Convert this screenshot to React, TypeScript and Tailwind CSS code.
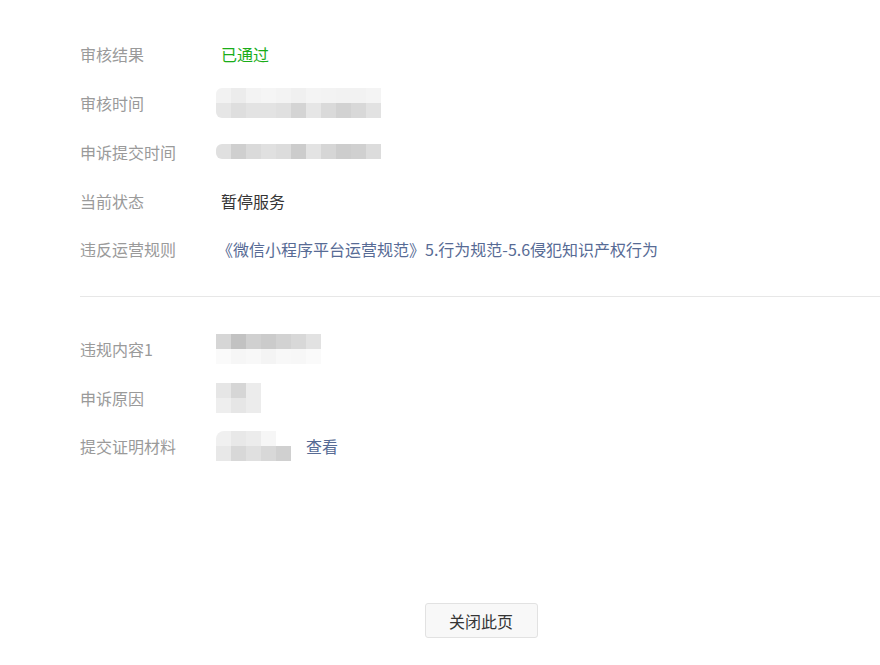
import React from "react";

const font = { fontFamily: '"Noto Sans CJK SC", "Noto Sans", sans-serif' };

// pixelated placeholder made of 15px tiles
const Mosaic = ({ rows, className = "" }: { rows: string[][]; className?: string }) => (
  <div className={`flex flex-col blur-[0.6px] -ml-[5px] ${className}`}>
    {rows.map((r, i) => (
      <div key={i} className="flex">
        {r.map((c, j) => (
          <div key={j} className="w-[15px] h-[15px]" style={{ background: c }} />
        ))}
      </div>
    ))}
  </div>
);

const Row = ({ label, h, children }: { label: string; h: string; children: React.ReactNode }) => (
  <div className={`flex items-center ${h}`}>
    <div className="w-[141px] shrink-0 text-[#9a9a9a]">{label}</div>
    <div className="flex items-center">{children}</div>
  </div>
);

export default function App() {
  const a = "h-[48.75px]";
  const b = "h-[48.5px]";
  return (
    <div className="bg-white min-h-screen w-[880px] h-[665px] text-[16px] flex flex-col" style={font}>
      <div className="pl-[80px] pt-[30px]">
        <Row h={a} label="审核结果">
          <span className="text-[#1aad19]">已通过</span>
        </Row>
        <Row h={a} label="审核时间">
          <Mosaic
            className="rounded-l-[6px] overflow-hidden"
            rows={[
              ["#f2f2f2", "#ececec", "#f3f3f3", "#f5f5f5", "#f3f3f3", "#f0f0f0", "#f4f4f4", "#f3f3f3", "#f2f2f2", "#f2f2f2", "#f4f4f4"],
              ["#e6e6e6", "#dedede", "#e3e3e3", "#e3e3e3", "#e0e0e0", "#d4d4d4", "#e6e6e6", "#dadada", "#d2d2d2", "#d8d8d8", "#e2e2e2"],
            ]}
          />
        </Row>
        <Row h={a} label="申诉提交时间">
          <Mosaic
            className="rounded-l-[6px] overflow-hidden"
            rows={[["#e0e0e0", "#cfcfcf", "#dadada", "#e0e0e0", "#dcdcdc", "#cccccc", "#e3e3e3", "#d6d6d6", "#cdcdcd", "#d0d0d0", "#dcdcdc"]]}
          />
        </Row>
        <Row h={a} label="当前状态">
          <span className="text-[#353535]">暂停服务</span>
        </Row>
        <Row h={a} label="违反运营规则">
          <span className="text-[#576b95] -ml-[4px]">《微信小程序平台运营规范》5.行为规范-5.6侵犯知识产权行为</span>
        </Row>
      </div>

      <div className="ml-[80px] mt-[22px] border-t border-[#e7e7e7]" />

      <div className="pl-[80px] pt-[28px]">
        <Row h={b} label="违规内容1">
          <Mosaic
            rows={[
              ["#d6d6d6", "#c2c2c2", "#d0d0d0", "#cbcbcb", "#d2d2d2", "#d8d8d8", "#e2e2e2"],
              ["#fafafa", "#f6f6f6", "#f8f8f8", "#f4f4f4", "#f8f8f8", "#f7f7f7", "#fafafa"],
            ]}
          />
        </Row>
        <Row h={b} label="申诉原因">
          <Mosaic
            rows={[
              ["#e6e6e6", "#d6d6d6", "#ececec"],
              ["#eeeeee", "#e6e6e6", "#ececec"],
            ]}
          />
        </Row>
        <Row h={b} label="提交证明材料">
          <Mosaic
            className="rounded-tl-[8px] overflow-hidden"
            rows={[
              ["#f0f0f0", "#e8e8e8", "#ececec", "#f6f6f6", "#ffffff"],
              ["#e8e8e8", "#d8d8d8", "#e0e0e0", "#d8d8d8", "#d0d0d0"],
            ]}
          />
          <span className="text-[#576b95] ml-[15px]">查看</span>
        </Row>
      </div>

      <div className="flex justify-center mt-[133px] pl-[82px]">
        <button className="w-[113px] h-[35px] rounded-[3px] border border-[#e2e2e2] bg-[#f8f8f8] text-[#353535] text-[16px]">
          关闭此页
        </button>
      </div>
    </div>
  );
}
